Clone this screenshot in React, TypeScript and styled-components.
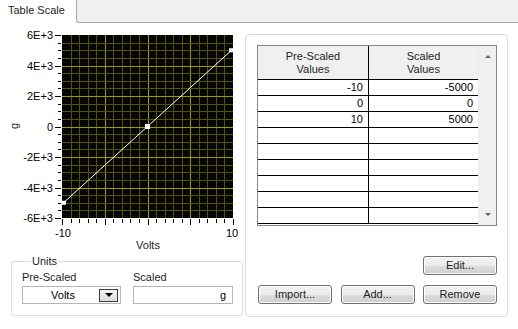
import * as React from "react"
import styled, { createGlobalStyle } from "styled-components"

const GlobalStyle = createGlobalStyle`
  html, body {
    margin: 0;
    padding: 0;
    background: #ffffff;
  }
  body {
    font-family: "Liberation Sans", Arial, sans-serif;
    font-size: 11px;
    color: #000000;
  }
`

const Window = styled.div`
  width: 518px;
  height: 329px;
  background: #ffffff;
  overflow: hidden;
`

const TabBar = styled.div`
  display: flex;
  height: 23px;
`

const Tab = styled.div`
  width: 76px;
  padding-left: 8px;
  box-sizing: border-box;
  line-height: 20px;
  font-size: 11px;
  color: #1e1e1e;
`

const TabFiller = styled.div`
  flex: 1;
  background: #f0f0f0;
  border-left: 1px solid #a7a7a7;
  border-bottom: 1px solid #a7a7a7;
  border-bottom-left-radius: 3px;
`

const Body = styled.div`
  display: flex;
  height: 306px;
`

const LeftColumn = styled.div`
  width: 245px;
  display: flex;
  flex-direction: column;
`

const Graph = styled.svg`
  display: block;
  width: 245px;
  height: 231px;
  font-family: "Liberation Sans", Arial, sans-serif;
  font-size: 11px;
`

const UnitsBox = styled.fieldset`
  margin: 0 0 0 11px;
  width: 231px;
  height: 62px;
  box-sizing: border-box;
  padding: 2px 9px 0 10px;
  border: 1px solid #d5dfe5;
  border-radius: 3px;
  display: flex;
  gap: 12px;
`

const UnitsLegend = styled.legend`
  padding: 0 1px;
  margin-left: 9px;
  line-height: 14px;
  color: #1e1e1e;
`

const Field = styled.div<{ $width: number }>`
  width: ${(p) => p.$width}px;
  display: flex;
  flex-direction: column;
  gap: 2px;
`

const FieldLabel = styled.div`
  line-height: 14px;
  color: #1e1e1e;
`

const Select = styled.div`
  height: 18px;
  box-sizing: border-box;
  border: 1px solid #b5b5b5;
  display: flex;
  align-items: center;
  padding-right: 2px;
`

const SelectText = styled.div`
  flex: 1;
  text-align: center;
  padding-left: 4px;
`

const SelectButton = styled.div`
  width: 19px;
  height: 13px;
  box-sizing: border-box;
  border: 1px solid #3c3c3c;
  background: linear-gradient(#f4f4f4, #dcdcdc);
  display: flex;
  align-items: center;
  justify-content: center;
`

const DownTriangle = styled.div<{ $color: string; $size: number }>`
  width: 0;
  height: 0;
  border-left: ${(p) => p.$size}px solid transparent;
  border-right: ${(p) => p.$size}px solid transparent;
  border-top: ${(p) => p.$size}px solid ${(p) => p.$color};
`

const UpTriangle = styled.div<{ $color: string; $size: number }>`
  width: 0;
  height: 0;
  border-left: ${(p) => p.$size}px solid transparent;
  border-right: ${(p) => p.$size}px solid transparent;
  border-bottom: ${(p) => p.$size}px solid ${(p) => p.$color};
`

const TextBox = styled.div`
  height: 18px;
  box-sizing: border-box;
  border: 1px solid #b5b5b5;
  line-height: 16px;
  text-align: right;
  padding-right: 6px;
`

const TablePanel = styled.div`
  margin-top: 11px;
  width: 263px;
  height: 283px;
  box-sizing: border-box;
  border: 1px solid #d5dfe5;
  border-radius: 4px;
  padding: 10px 10px 11px 11px;
  display: flex;
  flex-direction: column;
`

const Table = styled.div`
  width: 240px;
  height: 181px;
  box-sizing: border-box;
  border: 1px solid #828790;
  display: flex;
`

const TableGrid = styled.div`
  width: 220px;
  display: flex;
  flex-direction: column;
`

const HeaderRow = styled.div`
  display: flex;
  height: 34px;
  box-sizing: border-box;
  border-bottom: 1px solid #000000;
  background: #f0f0f0;
`

const HeaderCell = styled.div<{ $width: number; $divider?: boolean }>`
  width: ${(p) => p.$width}px;
  box-sizing: border-box;
  border-right: ${(p) => (p.$divider ? "1px solid #000000" : "none")};
  display: flex;
  flex-direction: column;
  justify-content: center;
  align-items: center;
  line-height: 13px;
  color: #1e1e1e;
`

const Row = styled.div`
  display: flex;
  height: 16px;
  box-sizing: border-box;
  border-bottom: 1px solid #000000;
`

const Cell = styled.div<{ $width: number; $divider?: boolean }>`
  width: ${(p) => p.$width}px;
  box-sizing: border-box;
  border-right: ${(p) => (p.$divider ? "1px solid #000000" : "none")};
  text-align: right;
  padding-right: 5px;
  line-height: 15px;
`

const ScrollBar = styled.div`
  flex: 1;
  background: #f0f0f0;
  border-left: 1px solid #e8e8e8;
  display: flex;
  flex-direction: column;
  justify-content: space-between;
  align-items: center;
  padding: 9px 0 9px;
`

const ButtonArea = styled.div`
  margin-top: 30px;
  padding-left: 1px;
  display: flex;
  flex-direction: column;
  gap: 10px;
`

const ButtonRow = styled.div<{ $align: string }>`
  display: flex;
  justify-content: ${(p) => p.$align};
`

const Button = styled.div`
  width: 74px;
  height: 19px;
  box-sizing: border-box;
  border: 1px solid #707070;
  border-radius: 3px;
  background: linear-gradient(#f2f2f2 0%, #ebebeb 50%, #dddddd 51%, #cfcfcf 100%);
  box-shadow: inset 0 0 0 1px #fcfcfc;
  text-align: center;
  line-height: 17px;
  color: #1e1e1e;
`

// plot geometry, in svg coordinates
const PLOT_X = 62
const PLOT_Y = 12
const PLOT_W = 171
const PLOT_H = 183

const MAJOR = "#9b9b00"
const MINOR = "#545400"

const px = (v: number) => PLOT_X + ((v + 10) / 20) * PLOT_W
const py = (v: number) => PLOT_Y + ((6000 - v) / 12000) * PLOT_H
const crisp = (n: number) => Math.round(n) + 0.5

const yLabels = [
  { v: 6000, t: "6E+3" },
  { v: 4000, t: "4E+3" },
  { v: 2000, t: "2E+3" },
  { v: 0, t: "0" },
  { v: -2000, t: "-2E+3" },
  { v: -4000, t: "-4E+3" },
  { v: -6000, t: "-6E+3" },
]

const points = [
  [-10, -5000],
  [0, 0],
  [10, 5000],
]

const ScaleGraph = () => {
  const vLines = []
  for (let i = 1; i < 20; i++) {
    const x = crisp(px(-10 + i))
    vLines.push(
      <line
        key={"v" + i}
        x1={x}
        x2={x}
        y1={PLOT_Y}
        y2={PLOT_Y + PLOT_H}
        stroke={i % 5 === 0 ? MAJOR : MINOR}
      />
    )
  }
  const hLines = []
  for (let j = 1; j < 24; j++) {
    const y = crisp(py(6000 - j * 500))
    hLines.push(
      <line
        key={"h" + j}
        x1={PLOT_X}
        x2={PLOT_X + PLOT_W}
        y1={y}
        y2={y}
        stroke={j % 4 === 0 ? MAJOR : MINOR}
      />
    )
  }
  const yTicks = []
  for (let j = 0; j <= 24; j++) {
    const y = crisp(py(6000 - j * 500))
    yTicks.push(
      <line key={"yt" + j} x1={j % 4 === 0 ? 55 : 58} x2={61} y1={y} y2={y} stroke="#000" />
    )
  }
  const xTicks = []
  for (let i = 0; i <= 20; i++) {
    const x = crisp(px(-10 + i))
    xTicks.push(
      <line key={"xt" + i} x1={x} x2={x} y1={196} y2={i % 5 === 0 ? 202 : 200} stroke="#000" />
    )
  }

  return (
    <Graph viewBox="0 0 245 231">
      <rect x={PLOT_X} y={PLOT_Y} width={PLOT_W} height={PLOT_H} fill="#060606" />
      {vLines}
      {hLines}
      {yTicks}
      {xTicks}
      {yLabels.map((l) => (
        <text key={l.t} x={53} y={py(l.v) + 4} textAnchor="end" fill="#000">
          {l.t}
        </text>
      ))}
      <text x={px(-10) + 1} y={214} textAnchor="middle" fill="#000">
        -10
      </text>
      <text x={px(10) - 1} y={214} textAnchor="middle" fill="#000">
        10
      </text>
      <text x={148} y={226} textAnchor="middle" fill="#1e1e1e">
        Volts
      </text>
      <text x={0} y={0} textAnchor="middle" fill="#1e1e1e" transform="translate(18 103) rotate(-90)">
        g
      </text>
      <line
        x1={px(-10) + 1.5}
        y1={py(-5000)}
        x2={px(10) - 1.5}
        y2={py(5000)}
        stroke="#ffffff"
        strokeWidth={1}
      />
      {points.map(([a, b], k) => {
        const s = k === 1 ? 5 : 4
        const cx = Math.min(Math.max(px(a), PLOT_X + 2), PLOT_X + PLOT_W - 2)
        return (
          <rect key={k} x={cx - s / 2} y={py(b) - s / 2} width={s} height={s} fill="#ffffff" />
        )
      })}
    </Graph>
  )
}

const rows = [
  ["-10", "-5000"],
  ["0", "0"],
  ["10", "5000"],
  ["", ""],
  ["", ""],
  ["", ""],
  ["", ""],
  ["", ""],
  ["", ""],
]

export default function App() {
  return (
    <Window>
      <GlobalStyle />
      <TabBar>
        <Tab>Table Scale</Tab>
        <TabFiller />
      </TabBar>
      <Body>
        <LeftColumn>
          <ScaleGraph />
          <UnitsBox>
            <UnitsLegend>Units</UnitsLegend>
            <Field $width={99}>
              <FieldLabel>Pre-Scaled</FieldLabel>
              <Select>
                <SelectText>Volts</SelectText>
                <SelectButton>
                  <DownTriangle $color="#000000" $size={4} />
                </SelectButton>
              </Select>
            </Field>
            <Field $width={100}>
              <FieldLabel>Scaled</FieldLabel>
              <TextBox>g</TextBox>
            </Field>
          </UnitsBox>
        </LeftColumn>
        <TablePanel>
          <Table>
            <TableGrid>
              <HeaderRow>
                <HeaderCell $width={111} $divider>
                  <span>Pre-Scaled</span>
                  <span>Values</span>
                </HeaderCell>
                <HeaderCell $width={109}>
                  <span>Scaled</span>
                  <span>Values</span>
                </HeaderCell>
              </HeaderRow>
              {rows.map((r, i) => (
                <Row key={i}>
                  <Cell $width={111} $divider>
                    {r[0]}
                  </Cell>
                  <Cell $width={109}>{r[1]}</Cell>
                </Row>
              ))}
            </TableGrid>
            <ScrollBar>
              <UpTriangle $color="#606060" $size={3} />
              <DownTriangle $color="#606060" $size={3} />
            </ScrollBar>
          </Table>
          <ButtonArea>
            <ButtonRow $align="flex-end">
              <Button>Edit...</Button>
            </ButtonRow>
            <ButtonRow $align="space-between">
              <Button>Import...</Button>
              <Button>Add...</Button>
              <Button>Remove</Button>
            </ButtonRow>
          </ButtonArea>
        </TablePanel>
      </Body>
    </Window>
  )
}
